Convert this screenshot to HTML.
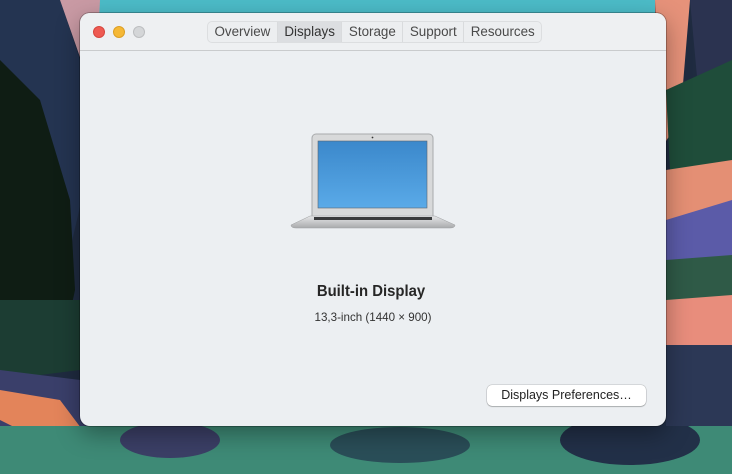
<!DOCTYPE html>
<html><head><meta charset="utf-8"><style>
*{margin:0;padding:0;box-sizing:border-box}
body{width:732px;height:474px;overflow:hidden;position:relative;font-family:"Liberation Sans",sans-serif;background:#1d2a3e}
#bg{position:absolute;left:0;top:0}
.win{position:absolute;left:80px;top:13px;width:586px;height:413px;background:#eceff2;border-radius:10px;overflow:hidden;box-shadow:0 0 0 1px rgba(0,0,0,.25),0 8px 24px rgba(0,0,0,.35)}
.tb{position:absolute;left:0;top:0;width:100%;height:38px;border-bottom:1px solid #c9cbcd;background:#eef0f2}
.dot{position:absolute;top:13px;width:12px;height:12px;border-radius:50%}
.seg{position:absolute;left:127px;top:8px;height:22px;display:flex;border:1px solid #dcdee0;border-radius:5px;background:#eceef0;font-size:13.4px;color:#4a4a4a}
.seg div{padding:0 6.5px;line-height:20px;border-right:1px solid #d9dbdd}
.seg div:last-child{border-right:none}
.seg .a{background:#dcdee1;color:#333}
.t1{position:absolute;left:-2px;width:100%;top:270px;text-align:center;font-weight:bold;font-size:15.5px;color:#262626;transform:scaleX(.96)}
.t2{position:absolute;left:0;width:100%;top:298px;text-align:center;font-size:11.6px;color:#333}
.btn{position:absolute;left:407px;top:372px;width:159px;height:21px;background:#fff;border-radius:5px;box-shadow:0 0 0 .5px rgba(0,0,0,.2),0 1px 1px rgba(0,0,0,.2);font-size:12.5px;text-align:center;line-height:21px;color:#222}
</style></head><body>
<svg id="bg" width="732" height="474" viewBox="0 0 732 474">
<rect width="732" height="474" fill="#1f2b40"/>
<rect x="95" y="0" width="560" height="20" fill="#4cbcc8"/>
<polygon points="0,0 60,0 100,120 70,250 0,260" fill="#243451"/>
<polygon points="60,0 100,0 95,100" fill="#c99aa4"/>
<polygon points="0,60 40,100 70,200 75,290 60,360 0,370" fill="#0f1d14"/>
<polygon points="0,300 80,300 80,370 0,380" fill="#1c3d33"/>
<polygon points="0,370 80,380 100,430 0,440" fill="#3a3f6a"/>
<polygon points="0,390 60,400 90,440 60,450 0,420" fill="#e3845a"/>
<rect x="0" y="426" width="732" height="48" fill="#3e8a76"/>
<ellipse cx="170" cy="440" rx="50" ry="18" fill="#3b3f66"/>
<ellipse cx="400" cy="445" rx="70" ry="18" fill="#2a4e58"/>
<ellipse cx="630" cy="440" rx="70" ry="25" fill="#223048"/>
<polygon points="655,0 690,0 680,120 660,150" fill="#e6927a"/>
<polygon points="690,0 732,0 732,120 700,110" fill="#2b3350"/>
<polygon points="666,90 732,60 732,160 670,170" fill="#1f4d3a"/>
<polygon points="666,170 732,160 732,230 666,260" fill="#e48f74"/>
<polygon points="666,220 732,200 732,260 666,270" fill="#5b5ba8"/>
<polygon points="666,260 732,255 732,300 666,300" fill="#2f5a47"/>
<polygon points="666,300 732,295 732,345 666,345" fill="#e88d7c"/>
<polygon points="666,345 732,345 732,426 666,426" fill="#2c3856"/>
</svg>
<div class="win">
 <div class="tb">
  <div class="dot" style="left:13px;background:#ee5a52;border:.5px solid #d6463e"></div>
  <div class="dot" style="left:33px;background:#f5b836;border:.5px solid #dc9f25"></div>
  <div class="dot" style="left:53px;background:#d4d6d8;border:.5px solid #bcbec0"></div>
  <div class="seg"><div>Overview</div><div class="a">Displays</div><div>Storage</div><div>Support</div><div>Resources</div></div>
 </div>
 <svg style="position:absolute;left:208px;top:118px" width="170" height="100" viewBox="0 0 170 100">
  <defs>
   <linearGradient id="sc" x1="0" y1="0" x2="0" y2="1"><stop offset="0" stop-color="#3b88cb"/><stop offset="1" stop-color="#5aaae8"/></linearGradient>
   <linearGradient id="bs" x1="0" y1="0" x2="0" y2="1"><stop offset="0" stop-color="#e6e7e8"/><stop offset="1" stop-color="#a9abad"/></linearGradient>
  </defs>
  <rect x="24" y="3" width="121" height="87" rx="4" fill="#d8d9da" stroke="#a8aaac"/>
  <rect x="30" y="10" width="109" height="67" fill="url(#sc)" stroke="#5a6470" stroke-width=".6"/>
  <circle cx="84.5" cy="6.5" r="0.9" fill="#333"/>
  <path d="M3 94 L22 85 L147 85 L167 94 Q167 97 162 97 L8 97 Q3 97 3 94Z" fill="url(#bs)" stroke="#9c9ea0" stroke-width=".5"/>
  <rect x="26" y="86" width="118" height="3" fill="#3a3b3d"/>
 </svg>
 <div class="t1">Built-in Display</div>
 <div class="t2">13,3-inch (1440 × 900)</div>
 <div class="btn">Displays Preferences…</div>
</div>
</body></html>
